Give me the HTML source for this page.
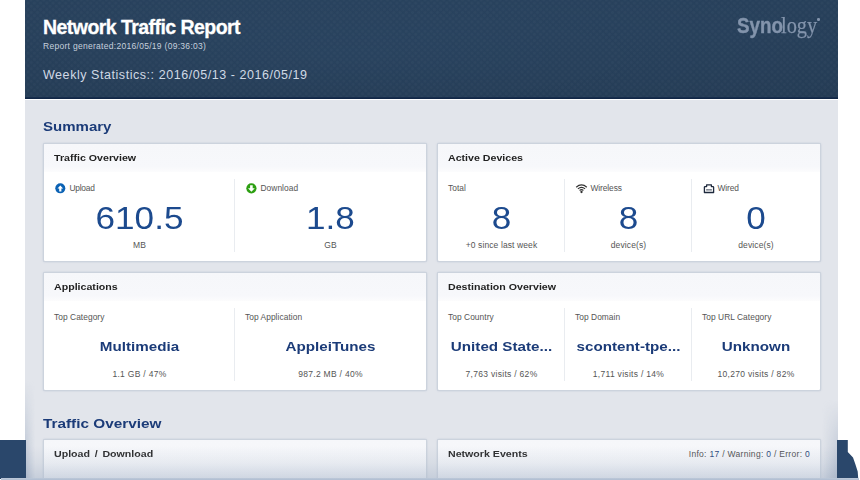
<!DOCTYPE html>
<html>
<head>
<meta charset="utf-8">
<title>Network Traffic Report</title>
<style>
*{box-sizing:border-box;margin:0;padding:0}
html,body{width:860px;height:480px;overflow:hidden;background:#fff}
body{font-family:"Liberation Sans",sans-serif;position:relative;color:#444}
#panel{position:absolute;left:25px;top:0;width:813px;height:480px;background:#e2e5eb;overflow:hidden}
#hdr{position:absolute;left:0;top:0;width:813px;height:100px;border-bottom:1px solid #fff;background:radial-gradient(circle at 50% 50%,rgba(255,255,255,0.026) 1px,rgba(255,255,255,0) 2.2px) 0 0/6.25px 6.25px,radial-gradient(circle at 50% 50%,rgba(255,255,255,0.026) 1px,rgba(255,255,255,0) 2.2px) 3.125px 3.125px/6.25px 6.25px,radial-gradient(ellipse 70% 90% at 40% 55%,rgba(0,0,0,0),rgba(0,0,0,0.08)),linear-gradient(#2a4562,#27405b)}
#hdr:after{content:"";position:absolute;left:0;top:97px;width:813px;height:2px;background:linear-gradient(#1a3050,#0f2442)}
#title{position:absolute;left:18px;top:15px;font-size:19.5px;font-weight:bold;color:#fff;-webkit-text-stroke:0.3px #fff;white-space:nowrap;line-height:24px;letter-spacing:-0.55px}
#gen{position:absolute;left:18px;top:41px;font-size:8.5px;color:#c6d0dd;white-space:nowrap;line-height:11px;letter-spacing:0.29px}
#week{position:absolute;left:18px;top:67px;font-size:12.5px;color:#d0d9e5;white-space:nowrap;line-height:16px;letter-spacing:0.55px}
#logo{position:absolute;left:0;top:0;color:#8394ac}
#logo b{position:absolute;left:711.8px;top:12px;font-size:22.7px;font-weight:bold;line-height:26px;white-space:nowrap;transform-origin:0 0;transform:scaleX(0.83);-webkit-text-stroke:0.4px #8394ac}
#logo i{position:absolute;left:756.3px;top:12px;font-family:"Liberation Serif",serif;font-style:normal;font-size:23.5px;line-height:26px;white-space:nowrap;transform-origin:0 0;transform:scaleX(0.865);-webkit-text-stroke:0.25px #8394ac}
#logo u{position:absolute;left:792px;top:18px;width:2.5px;height:2.5px;border-radius:50%;background:#8394ac}
.h2{position:absolute;left:18px;font-size:13.5px;font-weight:bold;color:#1b3b78;white-space:nowrap;line-height:16px;transform-origin:0 50%;transform:scaleX(1.113)}
.card{position:absolute;background:#fff;border:1px solid #ccd3dd;border-radius:2px;overflow:hidden;box-shadow:0 0 1.5px rgba(160,174,194,0.7)}
.ch{position:absolute;left:0;top:0;right:0;height:28px;background:linear-gradient(#f6f7fa,#f7f8fb 80%,#fcfcfd)}
.ch span{position:absolute;left:10px;top:0;font-size:9px;font-weight:bold;color:#222;line-height:29px;white-space:nowrap;transform-origin:0 50%;transform:scaleX(1.18)}
.cell{position:absolute;top:28px;bottom:0}
.dv{position:absolute;top:35px;width:1px;height:73px;background:#e9ecf0}
.lb{position:absolute;left:10px;top:10.8px;font-size:8.4px;color:#555;white-space:nowrap;line-height:11px;letter-spacing:0.05px}
.big{position:absolute;left:0;right:0;top:28px;text-align:center;font-size:32px;color:#1c4a8e;line-height:36px;white-space:nowrap;transform:scaleX(1.097)}
.sub{position:absolute;left:0;right:0;top:67.5px;text-align:center;font-size:8.5px;color:#555;line-height:11px;white-space:nowrap;letter-spacing:0.1px}
.mid{position:absolute;left:0;right:0;top:36.5px;text-align:center;font-size:13.5px;font-weight:bold;color:#1b3b78;line-height:17px;white-space:nowrap;transform:scaleX(1.125)}
.sub2{position:absolute;left:0;right:0;top:67.5px;text-align:center;font-size:8.5px;color:#555;line-height:11px;white-space:nowrap;letter-spacing:0.3px}
.ic{position:absolute;left:10.5px;top:11px}
.lbi{left:25.5px;letter-spacing:-0.1px}
</style>
</head>
<body>
<div id="panel">
  <div id="hdr">
    <div id="title">Network Traffic Report</div>
    <div id="gen">Report generated:2016/05/19 (09:36:03)</div>
    <div id="week">Weekly Statistics:: 2016/05/13 - 2016/05/19</div>
    <div id="logo"><b>Syno</b><i>logy</i><u></u></div>
  </div>
  <div class="h2" style="top:119px">Summary</div>

  <div class="card" style="left:18px;top:143px;width:384px;height:119px">
    <div class="ch"><span>Traffic Overview</span></div>
    <div class="cell" style="left:0;width:191px">
      <svg class="ic" width="11" height="11" viewBox="0 0 11 11"><circle cx="5.3" cy="5.35" r="5" fill="#0b62b4"/><path d="M5.3 2.4 L8.1 5.5 H6.4 V8.5 H4.2 V5.5 H2.5 Z" fill="#fff"/></svg>
      <div class="lb lbi" style="letter-spacing:-0.25px">Upload</div>
      <div class="big">610.5</div>
      <div class="sub">MB</div>
    </div>
    <div class="dv" style="left:190px"></div>
    <div class="cell" style="left:191px;width:191px">
      <svg class="ic" width="11" height="11" viewBox="0 0 11 11"><circle cx="5.4" cy="5.35" r="5.1" fill="#2d9f12"/><path d="M5.4 8.7 L8.8 5.2 H6.7 V2.3 H4.1 V5.2 H2 Z" fill="#fff"/></svg>
      <div class="lb lbi" style="letter-spacing:0.05px">Download</div>
      <div class="big">1.8</div>
      <div class="sub">GB</div>
    </div>
  </div>

  <div class="card" style="left:412px;top:143px;width:384px;height:119px">
    <div class="ch"><span>Active Devices</span></div>
    <div class="cell" style="left:0;width:127px">
      <div class="lb">Total</div>
      <div class="big">8</div>
      <div class="sub">+0 since last week</div>
    </div>
    <div class="dv" style="left:126px"></div>
    <div class="cell" style="left:127px;width:127px">
      <svg class="ic" width="13" height="10" viewBox="-0.5 0 13 10" style="top:12px;left:10px"><path d="M0.7 3.2 Q6 -1.4 11.3 3.2" fill="none" stroke="#333" stroke-width="1.2"/><path d="M2.4 4.9 Q6 1.7 9.6 4.9" fill="none" stroke="#333" stroke-width="1.2"/><path d="M4.1 6.5 Q6 4.9 7.9 6.5" fill="none" stroke="#333" stroke-width="1.2"/><circle cx="6" cy="8" r="1.15" fill="#333"/></svg>
      <div class="lb lbi">Wireless</div>
      <div class="big">8</div>
      <div class="sub">device(s)</div>
    </div>
    <div class="dv" style="left:253px"></div>
    <div class="cell" style="left:254px;width:128px">
      <svg class="ic" width="12" height="10" viewBox="-0.6 0 12 10" style="top:12px;left:11px"><path d="M0.8 8.5 V3.3 Q0.8 2.6 1.5 2.6 H3 V0.8 H7.8 V2.6 H9.3 Q10 2.6 10 3.3 V8.5 Z" fill="none" stroke="#1f2a3d" stroke-width="1.3" stroke-linejoin="round"/><rect x="2.8" y="5.2" width="1.3" height="1.3" fill="#1f2a3d"/><rect x="4.75" y="5.2" width="1.3" height="1.3" fill="#1f2a3d"/><rect x="6.7" y="5.2" width="1.3" height="1.3" fill="#1f2a3d"/></svg>
      <div class="lb lbi">Wired</div>
      <div class="big">0</div>
      <div class="sub">device(s)</div>
    </div>
  </div>

  <div class="card" style="left:18px;top:272px;width:384px;height:119px">
    <div class="ch"><span>Applications</span></div>
    <div class="cell" style="left:0;width:191px">
      <div class="lb">Top Category</div>
      <div class="mid">Multimedia</div>
      <div class="sub2">1.1 GB / 47%</div>
    </div>
    <div class="dv" style="left:190px"></div>
    <div class="cell" style="left:191px;width:191px">
      <div class="lb">Top Application</div>
      <div class="mid">AppleiTunes</div>
      <div class="sub2">987.2 MB / 40%</div>
    </div>
  </div>

  <div class="card" style="left:412px;top:272px;width:384px;height:119px">
    <div class="ch"><span>Destination Overview</span></div>
    <div class="cell" style="left:0;width:127px">
      <div class="lb">Top Country</div>
      <div class="mid">United State...</div>
      <div class="sub2">7,763 visits / 62%</div>
    </div>
    <div class="dv" style="left:126px"></div>
    <div class="cell" style="left:127px;width:127px">
      <div class="lb">Top Domain</div>
      <div class="mid">scontent-tpe...</div>
      <div class="sub2">1,711 visits / 14%</div>
    </div>
    <div class="dv" style="left:253px"></div>
    <div class="cell" style="left:254px;width:128px">
      <div class="lb">Top URL Category</div>
      <div class="mid">Unknown</div>
      <div class="sub2">10,270 visits / 82%</div>
    </div>
  </div>

  <div class="h2" style="top:416px;transform:scaleX(1.135)">Traffic Overview</div>

  <div class="card" style="left:18px;top:439px;width:384px;height:60px">
    <div class="ch" style="height:60px"><span style="word-spacing:1.5px">Upload / Download</span></div>
  </div>
  <div class="card" style="left:412px;top:439px;width:384px;height:60px">
    <div class="ch" style="height:60px"><span>Network Events</span></div>
    <div style="position:absolute;right:10px;top:0px;line-height:28px;font-size:8.5px;color:#4a4a4a;letter-spacing:0.3px;white-space:nowrap">Info: <span style="color:#1c3f75">17</span> / Warning: <span style="color:#1c3f75">0</span> / Error: <span style="color:#1c3f75">0</span></div>
  </div>
  <div style="position:absolute;left:0;top:446px;width:813px;height:34px;background:linear-gradient(rgba(176,188,206,0),rgba(176,188,206,0.22) 50%,rgba(176,188,206,0.6))"></div>
  <div style="position:absolute;left:0;top:380px;width:10px;height:100px;background:linear-gradient(to right,rgba(150,166,190,0.6),rgba(150,166,190,0));-webkit-mask-image:linear-gradient(transparent,#000);mask-image:linear-gradient(transparent,#000)"></div>
  <div style="position:absolute;left:797px;top:400px;width:16px;height:80px;background:linear-gradient(to left,rgba(150,166,190,0.6),rgba(150,166,190,0));-webkit-mask-image:linear-gradient(transparent,#000);mask-image:linear-gradient(transparent,#000)"></div>
</div>
<div style="position:absolute;left:0;top:440px;width:26px;height:39px;background:#2a476b"></div>
<svg style="position:absolute;left:837px;top:440px" width="23" height="39"><polygon points="0,0 10.8,0 10.8,11.9 16,17.5 18.3,24 20.7,31.5 21.2,38.6 0,38.6" fill="#2a476b"/></svg>
<div style="position:absolute;left:1px;top:478px;width:858px;height:2px;background:linear-gradient(#c0cbda,#b3c0d3 50%)"></div>
</body>
</html>
